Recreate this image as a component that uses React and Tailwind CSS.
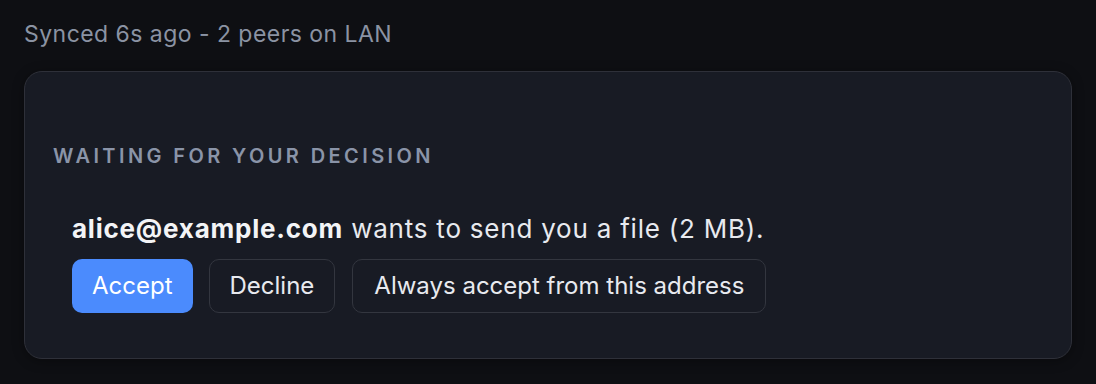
export default function App() {
  return (
    <div
      className="min-h-screen w-full bg-[#0e0f13] px-6 pt-[18px] pb-6"
      style={{ fontFamily: "Inter, 'Noto Sans', sans-serif" }}
    >
      <p className="text-[23px] leading-[32px] tracking-[0.02em] text-[#8b93a3]">
        Synced 6s ago - 2 peers on LAN
      </p>

      <div className="mt-[21px] h-[288px] rounded-[18px] border border-[#2e3039] bg-[#181b24] px-[28px] pt-[70px] shadow-[0_2px_12px_rgba(0,0,0,0.35)]">
        <h3 className="text-[20px] font-semibold uppercase leading-[28px] tracking-[0.17em] text-[#8a94a8]">
          Waiting for your decision
        </h3>

        <div className="mt-[42px] pl-[19px]">
          <p className="text-[26px] leading-[34px] tracking-[0.03em] text-[#e8eaef]">
            <span className="font-bold text-[#f3f4f6]">alice@example.com</span>{" "}
            wants to send you a file (2 MB).
          </p>
          <div className="mt-[13px] flex gap-4">
            <button className="h-[54px] rounded-[10px] bg-[#4b8bfd] px-[20px] text-[24px] font-normal text-white">
              Accept
            </button>
            <button className="h-[54px] rounded-[10px] border border-[#33363f] bg-[#181b24] px-[20px] text-[24px] font-normal text-[#e8eaef]">
              Decline
            </button>
            <button className="ml-[1px] h-[54px] rounded-[10px] border border-[#33363f] bg-[#181b24] px-[21px] text-[24px] font-normal text-[#e8eaef]">
              Always accept from this address
            </button>
          </div>
        </div>
      </div>
    </div>
  );
}
